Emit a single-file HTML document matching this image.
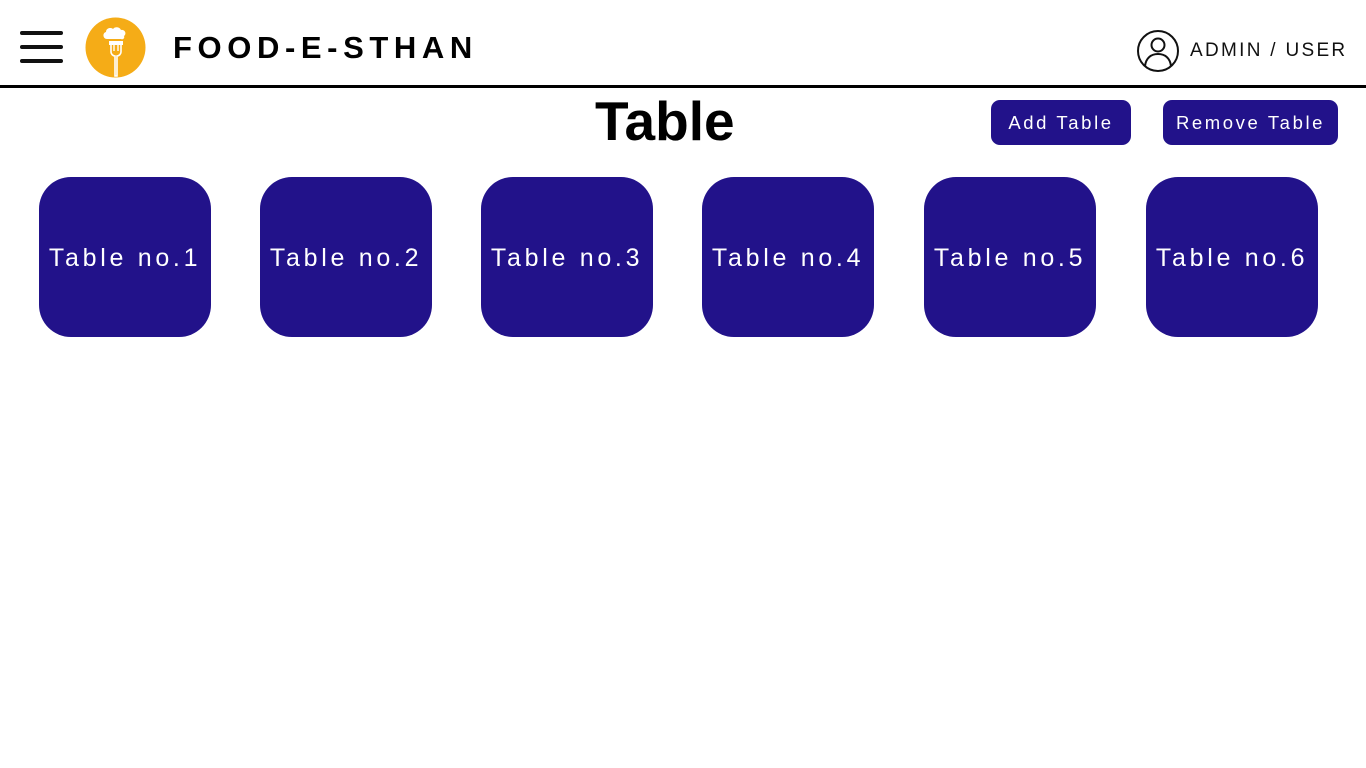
<!DOCTYPE html>
<html><head><style>
body{margin:0;width:1366px;height:768px;background:#fff;font-family:"Liberation Sans",sans-serif;position:relative;overflow:hidden}
.abs{position:absolute}
.bar{position:absolute;left:20px;width:43px;height:4px;background:#111;border-radius:2px}
.card{position:absolute;top:177px;width:172px;height:160px;background:#22128a;border-radius:32px;color:#fff;font-size:25px;letter-spacing:3.7px;display:flex;align-items:center;justify-content:center;white-space:nowrap;padding-top:3px;box-sizing:border-box}
.btn{position:absolute;top:100px;height:45px;background:#22128a;border-radius:9px;color:#fff;font-size:18.5px;letter-spacing:2.6px;display:flex;align-items:center;justify-content:center}
</style></head><body>
<div class="bar" style="top:31px"></div>
<div class="bar" style="top:45px"></div>
<div class="bar" style="top:59px"></div>
<svg class="abs" style="left:85px;top:17px" width="61" height="61" viewBox="0 0 61 61">
<circle cx="30.5" cy="30.5" r="30" fill="#f5ac17"/>
<path d="M22 22c-4 0-5-6-1-7 0-4 5-5 7-3 2-3 7-2 8 1 4-1 6 4 3 6 1 2-1 4-3 3h-14z" fill="#fff"/>
<rect x="24" y="24" width="14" height="4" fill="#fff"/>
<path d="M26 26v9c0 2 2 4 4 4v20h2V39c2 0 4-2 4-4v-9" stroke="#fff" stroke-width="1.6" fill="none"/>
<path d="M29 26v8M33 26v8" stroke="#fff" stroke-width="1.4"/>
</svg>
<div class="abs" style="left:173px;top:30px;font-size:31px;font-weight:bold;letter-spacing:5.6px">FOOD-E-STHAN</div>
<svg class="abs" style="left:1136px;top:29px" width="44" height="44" viewBox="0 0 44 44" fill="none" stroke="#111" stroke-width="2">
<circle cx="22" cy="22" r="20"/><circle cx="22" cy="16" r="6.5"/><path d="M9 37c1-8 6-12 13-12s12 4 13 12"/>
</svg>
<div class="abs" style="left:1190px;top:40px;font-size:19px;letter-spacing:2.3px;color:#111">ADMIN / USER</div>
<div class="abs" style="left:0;top:85px;width:1366px;height:3px;background:#000"></div>
<div class="abs" style="left:595px;top:89px;font-size:55px;font-weight:bold">Table</div>
<div class="btn" style="left:991px;width:140px">Add Table</div>
<div class="btn" style="left:1163px;width:175px">Remove Table</div>
<div class="card" style="left:39px">Table no.1</div>
<div class="card" style="left:260px">Table no.2</div>
<div class="card" style="left:481px">Table no.3</div>
<div class="card" style="left:702px">Table no.4</div>
<div class="card" style="left:924px">Table no.5</div>
<div class="card" style="left:1146px">Table no.6</div>
</body></html>
